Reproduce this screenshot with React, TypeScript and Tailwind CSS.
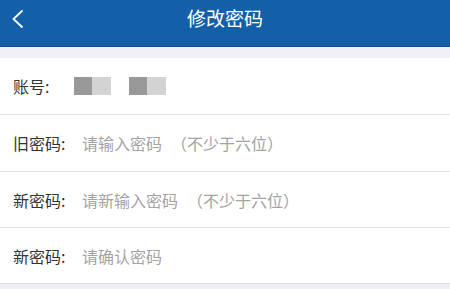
import React from "react";

const font = { fontFamily: '"Noto Sans CJK SC", "Noto Sans", sans-serif' };

function Row({ label, placeholder, hint, tall }: { label: string; placeholder: string; hint?: string; tall?: boolean }) {
  return (
    <div className={`flex ${tall ? "h-[57px]" : "h-[56px]"} items-center border-b border-[#e2e2e2] bg-white pl-[13px]`}>
      <span className="w-[69px] shrink-0 text-[16px] text-[#333333]">{label}</span>
      <span className="text-[16px] text-[#a3a3a3]">
        {placeholder}
        {hint ? <span className="ml-[9px]">{hint}</span> : null}
      </span>
    </div>
  );
}

export default function App() {
  return (
    <div className="h-[289px] w-[450px] overflow-hidden bg-[#efeff4]" style={font}>
      <div className="relative flex h-[47px] items-start justify-center border-b border-[#0d4f8e] bg-[#1360a8] pt-[4px]">
        <svg className="absolute left-[11px] top-[10px]" width="13" height="18" viewBox="0 0 13 18">
          <path d="M11 1 L2.5 9 L11 17" fill="none" stroke="white" strokeWidth="1.8" strokeLinecap="round" strokeLinejoin="round" />
        </svg>
        <span className="text-[19px] leading-[28px] text-white">修改密码</span>
      </div>
      <div className="h-[11px] bg-[#efeff4]" />
      <div className="flex h-[57px] items-center border-b border-[#e2e2e2] bg-white pl-[13px]">
        <span className="w-[61px] shrink-0 text-[16px] text-[#333333]">账号:</span>
        <div className="flex">
          <div className="h-[18px] w-[18px] bg-[#999999]" />
          <div className="h-[18px] w-[19px] bg-[#d3d3d3]" />
        </div>
        <div className="ml-[18px] flex">
          <div className="h-[18px] w-[18px] bg-[#999999]" />
          <div className="h-[18px] w-[19px] bg-[#d3d3d3]" />
        </div>
      </div>
      <Row label="旧密码:" placeholder="请输入密码" hint="（不少于六位）" tall />
      <Row label="新密码:" placeholder="请新输入密码" hint="（不少于六位）" />
      <Row label="新密码:" placeholder="请确认密码" />
    </div>
  );
}
